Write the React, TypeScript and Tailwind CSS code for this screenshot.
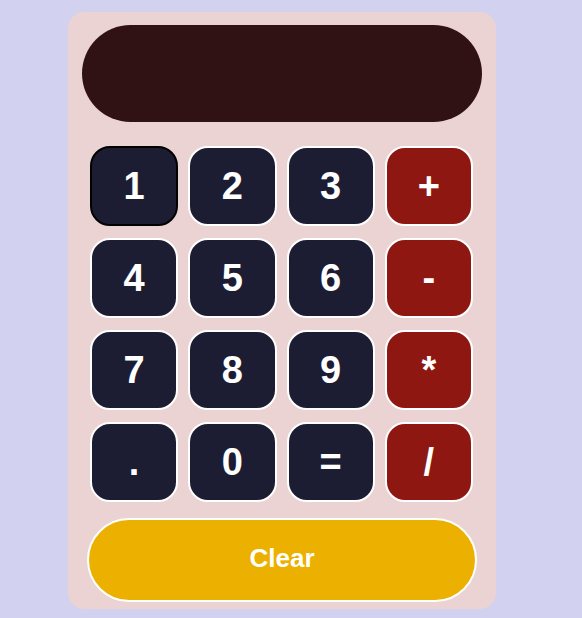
import React from "react";

/* ---------------- KEYS ---------------- */

type Key = { label: string; op?: boolean };

const keys: Key[] = [
  { label: "1" },
  { label: "2" },
  { label: "3" },
  { label: "+", op: true },
  { label: "4" },
  { label: "5" },
  { label: "6" },
  { label: "-", op: true },
  { label: "7" },
  { label: "8" },
  { label: "9" },
  { label: "*", op: true },
  { label: "." },
  { label: "0" },
  { label: "=" },
  { label: "/", op: true },
];

/* ---------------- COMPONENT ---------------- */

export default function App() {
  return (
    <div
      className="min-h-screen w-full bg-[#d2d1ef] pt-[12px] pl-[68px]"
      style={{ fontFamily: '"Liberation Sans", Arial, sans-serif' }}
    >
      <div className="flex w-[428px] h-[597px] flex-col rounded-[16px] bg-[#ebd3d3] px-[14px] pt-[13px]">
        {/* DISPLAY */}
        <div className="h-[97px] w-[400px] rounded-full bg-[#311214]" />

        {/* KEYPAD */}
        <div className="mt-[24px] ml-[8px] grid w-[383px] grid-cols-4 gap-x-[10px] gap-y-[12px]">
          {keys.map((k, i) => (
            <button
              key={k.label}
              className={`flex h-[80px] items-center justify-center rounded-[20px] border-2 text-[38px] font-bold text-white ${
                k.op ? "bg-[#8e1711]" : "bg-[#1c1d33]"
              } ${i === 0 ? "border-black" : "border-white"}`}
            >
              {k.label}
            </button>
          ))}
        </div>

        {/* CLEAR */}
        <button className="mx-[5px] mt-[16px] h-[84px] rounded-full border-2 border-white bg-[#ebb000] pb-[3px] text-[26px] font-bold text-white">
          Clear
        </button>
      </div>
    </div>
  );
}
